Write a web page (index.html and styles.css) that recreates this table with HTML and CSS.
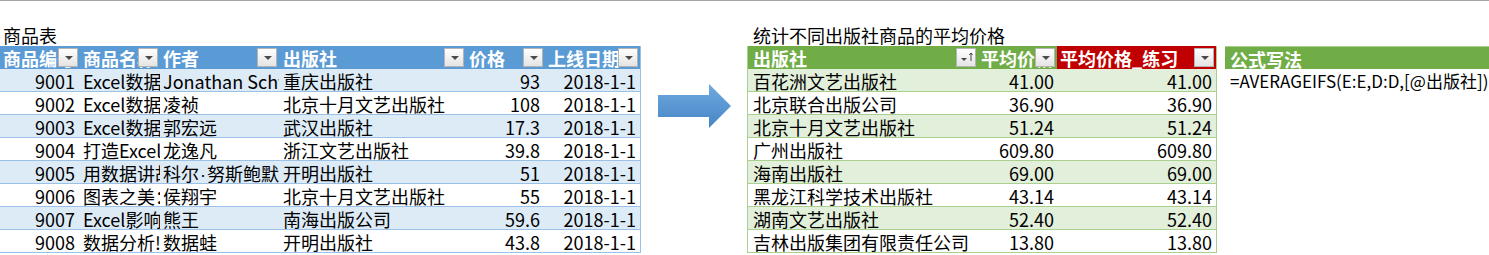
FILE: index.html
```html
<!DOCTYPE html>
<html lang="zh-CN">
<head>
<meta charset="utf-8">
<title>商品表</title>
<link rel="stylesheet" href="styles.css">
</head>
<body>
<div class="sheet">
  <section class="block goods-block">
    <div class="caption">商品表</div>
    <div class="tbl goods">
      <div class="row head">
        <div class="cell">商品编号<span class="flt"></span></div>
        <div class="cell">商品名称<span class="flt"></span></div>
        <div class="cell">作者<span class="flt"></span></div>
        <div class="cell">出版社<span class="flt"></span></div>
        <div class="cell">价格<span class="flt"></span></div>
        <div class="cell">上线日期<span class="flt"></span></div>
      </div>
      <div class="row odd"><div class="cell num">9001</div><div class="cell">Excel数据透视表应用大全</div><div class="cell">Jonathan Schwabish</div><div class="cell">重庆出版社</div><div class="cell num">93</div><div class="cell num">2018-1-1</div></div>
      <div class="row"><div class="cell num">9002</div><div class="cell">Excel数据·处理与分析</div><div class="cell">凌祯</div><div class="cell">北京十月文艺出版社</div><div class="cell num">108</div><div class="cell num">2018-1-1</div></div>
      <div class="row odd"><div class="cell num">9003</div><div class="cell">Excel数据可视化之美</div><div class="cell">郭宏远</div><div class="cell">武汉出版社</div><div class="cell num">17.3</div><div class="cell num">2018-1-1</div></div>
      <div class="row"><div class="cell num">9004</div><div class="cell">打造Excel商务图表</div><div class="cell">龙逸凡</div><div class="cell">浙江文艺出版社</div><div class="cell num">39.8</div><div class="cell num">2018-1-1</div></div>
      <div class="row odd"><div class="cell num">9005</div><div class="cell">用数据讲故事</div><div class="cell">科尔<span class="dot">·</span>努斯鲍默<span class="dot">·</span>纳福利克</div><div class="cell">开明出版社</div><div class="cell num">51</div><div class="cell num">2018-1-1</div></div>
      <div class="row"><div class="cell num">9006</div><div class="cell">图表之美：以最简单的方式</div><div class="cell">侯翔宇</div><div class="cell">北京十月文艺出版社</div><div class="cell num">55</div><div class="cell num">2018-1-1</div></div>
      <div class="row odd"><div class="cell num">9007</div><div class="cell">Excel影响力</div><div class="cell">熊王</div><div class="cell">南海出版公司</div><div class="cell num">59.6</div><div class="cell num">2018-1-1</div></div>
      <div class="row"><div class="cell num">9008</div><div class="cell">数据分析!思维</div><div class="cell">数据蛙</div><div class="cell">开明出版社</div><div class="cell num">43.8</div><div class="cell num">2018-1-1</div></div>
    </div>
  </section>

  <div class="arrow">
    <svg width="73" height="44" viewBox="0 0 73 44">
      <defs>
        <linearGradient id="ag" x1="0" y1="0" x2="0" y2="1">
          <stop offset="0" stop-color="#6fa9df"/>
          <stop offset="1" stop-color="#4685c6"/>
        </linearGradient>
      </defs>
      <polygon points="0,11 51,11 51,0 73,22 51,44 51,33 0,33" fill="url(#ag)"/>
    </svg>
  </div>

  <section class="block avg-block">
    <div class="caption">统计不同出版社商品的平均价格</div>
    <div class="tbl avg">
      <div class="row head">
        <div class="cell">出版社<span class="flt sort"><svg width="19" height="19" viewBox="0 0 19 19"><polygon points="4,10 10,10 7,13" fill="#444"/><path d="M14 13V5M12.3 7L14 5l1.7 2" stroke="#444" stroke-width="1" fill="none"/></svg></span></div>
        <div class="cell">平均价格<span class="flt"></span></div>
        <div class="cell red">平均价格_练习<span class="flt"></span></div>
      </div>
      <div class="row odd"><div class="cell">百花洲文艺出版社</div><div class="cell num">41.00</div><div class="cell num">41.00</div></div>
      <div class="row"><div class="cell">北京联合出版公司</div><div class="cell num">36.90</div><div class="cell num">36.90</div></div>
      <div class="row odd"><div class="cell">北京十月文艺出版社</div><div class="cell num">51.24</div><div class="cell num">51.24</div></div>
      <div class="row"><div class="cell">广州出版社</div><div class="cell num">609.80</div><div class="cell num">609.80</div></div>
      <div class="row odd"><div class="cell">海南出版社</div><div class="cell num">69.00</div><div class="cell num">69.00</div></div>
      <div class="row"><div class="cell">黑龙江科学技术出版社</div><div class="cell num">43.14</div><div class="cell num">43.14</div></div>
      <div class="row odd"><div class="cell">湖南文艺出版社</div><div class="cell num">52.40</div><div class="cell num">52.40</div></div>
      <div class="row"><div class="cell">吉林出版集团有限责任公司</div><div class="cell num">13.80</div><div class="cell num">13.80</div></div>
    </div>
  </section>

  <section class="block formula-block">
    <div class="caption"></div>
    <div class="formula-head">公式写法</div>
    <div class="formula">=AVERAGEIFS(E:E,D:D,[@出版社])</div>
  </section>
</div>
</body>
</html>
```

FILE: styles.css
```css
* { box-sizing: border-box; }

html, body {
  margin: 0;
  padding: 0;
  background: #ffffff;
}

body {
  font-family: "Noto Sans CJK SC", "Noto Sans", sans-serif;
  font-size: 18px;
  color: #000;
  width: 1489px;
  height: 255px;
  overflow: hidden;
}

.sheet {
  border-top: 1px solid #a3a3a3;
  padding-top: 22px;
  display: flex;
  align-items: flex-start;
}

.caption {
  height: 23px;
  line-height: 24px;
  padding-left: 3px;
  white-space: nowrap;
}

.goods-block { width: 641px; flex: none; }

.arrow {
  flex: none;
  width: 73px;
  height: 44px;
  margin-left: 17px;
  margin-top: 61px;
}
.arrow svg { display: block; }

.avg-block { width: 470px; margin-left: 16px; flex: none; }
.avg-block .caption { padding-left: 6px; }

.formula-block { width: 264px; margin-left: 8px; flex: none; }

.tbl { display: flex; flex-direction: column; }

.row { display: grid; }

.goods .row {
  grid-template-columns: 80px 80px 119px 187px 79px 95px;
  border-right: 1px solid #9bc2e6;
}
.avg .row {
  grid-template-columns: 230px 79px 159px;
  border-left: 1px solid #a9d08e;
  border-right: 1px solid #a9d08e;
}

.cell {
  position: relative;
  height: 23px;
  line-height: 24px;
  padding: 0 3px;
  white-space: nowrap;
  overflow: hidden;
}
.cell.num { text-align: right; padding-right: 4px; }

.dot {
  font-family: "Liberation Sans", sans-serif;
  padding: 0 1px;
}

.goods .row:not(.head) .cell { border-bottom: 1px solid #9bc2e6; }
.goods .row.odd { background: #ddebf7; }
.goods .head { background: #5b9bd5; }
.goods .row .cell:first-child.num { padding-right: 5px; }
.goods .row .cell:nth-child(5).num { padding-right: 5px; }
.goods .row .cell:nth-child(4) { padding-left: 4px; }

.avg .row:not(.head) .cell { border-bottom: 1px solid #a9d08e; }
.avg .row.odd { background: #e2efda; }
.avg .head { background: #70ad47; }
.avg .row .cell:first-child { padding-left: 5px; }
.avg .row .cell:nth-child(2).num { padding-right: 3px; }
.avg .head .cell.red { background: #c00000; }

.head .cell {
  color: #ffffff;
  font-weight: 700;
}

.flt {
  position: absolute;
  top: 2px;
  right: 2px;
  width: 20px;
  height: 19px;
  border: 1px solid #b4b4b4;
  background: linear-gradient(#ffffff, #e4e4e4);
}
.flt::after {
  content: "";
  position: absolute;
  left: 6px;
  top: 7px;
  border-left: 4px solid transparent;
  border-right: 4px solid transparent;
  border-top: 4px solid #4a4a4a;
}
.flt.sort::after { display: none; }
.flt.sort svg { position: absolute; left: 0; top: -1px; }

.formula-head {
  height: 23px;
  line-height: 24px;
  background: #70ad47;
  color: #ffffff;
  font-weight: 700;
  padding-left: 5px;
  border-top: 1px solid #a9d08e;
}

.formula {
  height: 23px;
  line-height: 24px;
  padding-left: 5px;
  font-size: 17px;
  white-space: nowrap;
}
```
